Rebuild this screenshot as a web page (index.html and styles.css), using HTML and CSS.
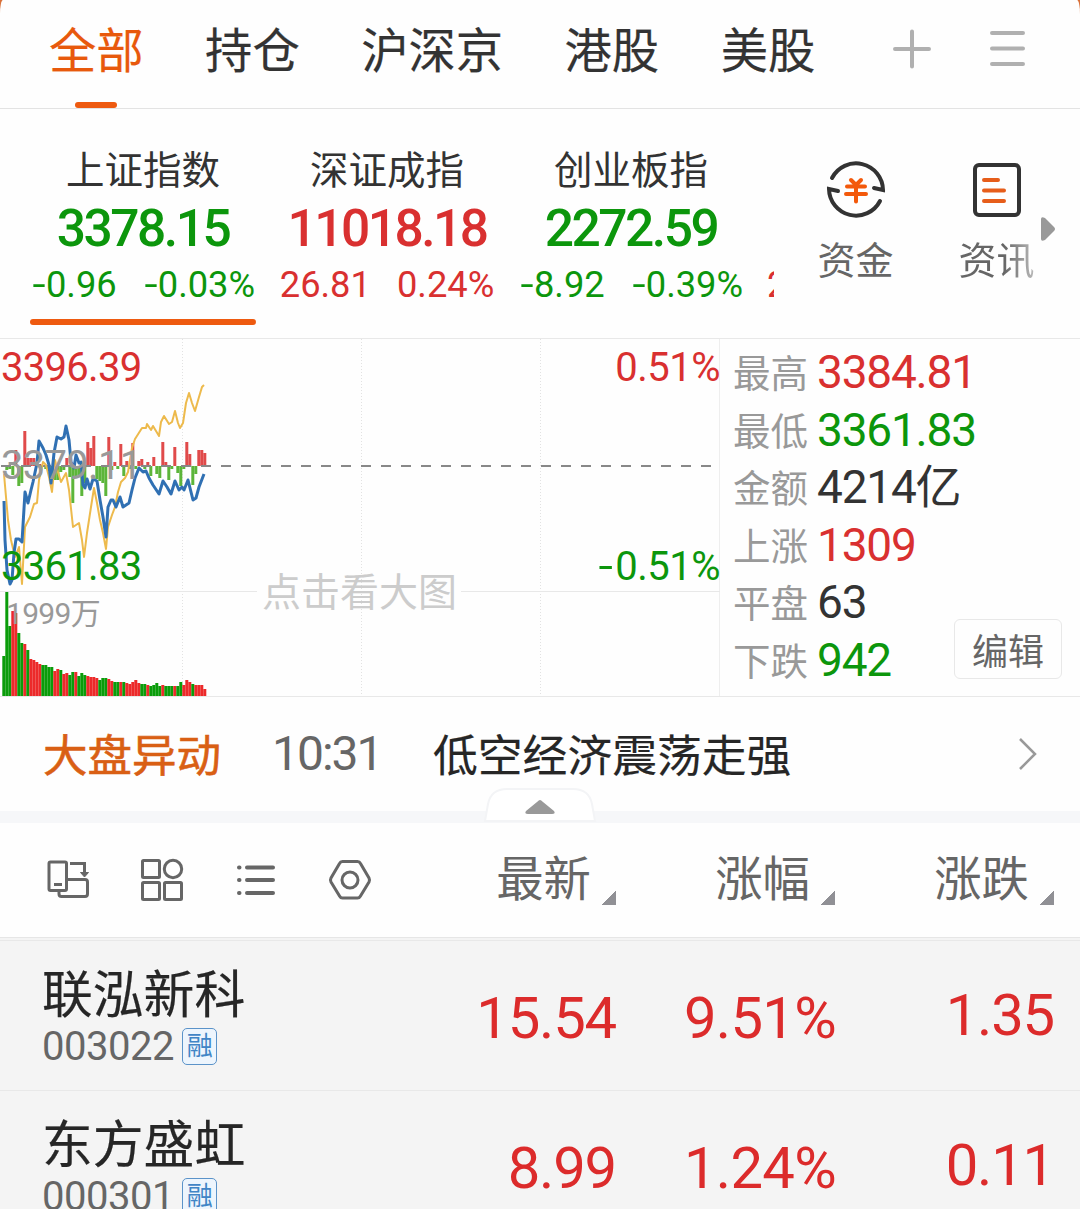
FILE: index.html
```html
<!doctype html>
<html lang="zh-CN">
<head>
	<meta charset="utf-8">
	<title>自选股</title>
	<link rel="stylesheet" href="styles.css">
</head>
<body>
<div class="page">
	<nav class="tabs">
		<a class="tab active">全部</a>
		<a class="tab">持仓</a>
		<a class="tab">沪深京</a>
		<a class="tab">港股</a>
		<a class="tab">美股</a>
		<svg class="icon-plus" width="40" height="42" viewBox="0 0 40 42"><path d="M3 21h34M20 3.500v35"/></svg>
		<svg class="icon-menu" width="40" height="42" viewBox="0 0 40 42"><path d="M4 5h31M4 20.500h31M4 36h31"/></svg>
	</nav>

	<section class="indexes">
		<div class="index-list">
			<div class="index green active">
				<h2>上证指数</h2>
				<strong>3378.15</strong>
				<p><span><i>-</i>0.96</span><span><i>-</i>0.03%</span></p>
			</div>
			<div class="index red">
				<h2>深证成指</h2>
				<strong>11018.18</strong>
				<p><span>26.81</span><span>0.24%</span></p>
			</div>
			<div class="index green">
				<h2>创业板指</h2>
				<strong>2272.59</strong>
				<p><span><i>-</i>8.92</span><span><i>-</i>0.39%</span></p>
			</div>
			<div class="index red next">
				<p><span>2</span></p>
			</div>
		</div>
		<div class="links">
			<a class="link">
				<svg width="62" height="62" viewBox="0 0 62 62">
					<g fill="none" stroke="#333" stroke-width="4" stroke-linecap="round">
						<path d="M7 19A27 27 0 0 1 58 31L49 29"/>
						<path d="M55 42A27 27 0 0 1 4 30L13 32"/>
					</g>
					<path d="M26 21l5 5 5-5M22 27.500h18M21 35h20M31 26v16.500" fill="none" stroke="#f3590b" stroke-width="4" stroke-linecap="round"/>
				</svg>
				<span>资金</span>
			</a>
			<a class="link">
				<svg width="62" height="62" viewBox="0 0 62 62">
					<rect x="9" y="6" width="44" height="50" rx="4" fill="none" stroke="#333" stroke-width="4"/>
					<path d="M18 21h14M18 31.500h20M18 42h20" fill="none" stroke="#e65d1a" stroke-width="4" stroke-linecap="round"/>
				</svg>
				<span class="fade">资讯</span>
			</a>
			<svg class="more" width="16" height="26" viewBox="0 0 16 26"><path d="M1 3Q1 0 5 2L14 11Q16 13 14 15L5 24Q1 26 1 23z" fill="#999"/></svg>
		</div>
	</section>

	<section class="market">
		<div class="chart">
			<svg width="720" height="357" viewBox="0 339 720 357">
				<path class="grid" d="M182.500 339v357M361.500 339v357M540.500 339v357"/>
				<path class="rule" d="M0 591.500h257M461 591.500h259"/>
				<g id="volume"></g>
				<g id="strength"></g>
				<path class="base" d="M1 466h712"/>
				<polyline class="average" points="4,474 6,497 8,520 11,540 15,557 19,547 22,584 25,527 30,517 34,504 37,503 39,480 43,462 46,465 49,477 52,492 55,460 58,472 61,482 66,473 69,490 73,527 79,523 82,540 84,557 87,533 91,507 94,488 97,503 100,520 103,533 106,549 108,527 112,515 115,507 118,492 121,482 125,478 128,472 132,448 135,439 142,428 146,428 147,424 151,430 153,426 159,436 161,422 164,416 169,424 172,422 175,411 178,423 180,428 183,423 186,403 189,393 192,403 195,411 199,397 202,387 204,385"/>
				<polyline class="price" points="4,501 5,540 7,570 10,584 12,580 14,553 16,539 19,539 22,542 25,492 28,503 31,490 33,482 37,463 39,441 43,448 46,455 49,465 51,483 54,453 57,437 61,439 64,437 66,426 69,440 71,462 74,468 76,455 79,463 81,462 83,485 85,488 87,479 90,489 93,479 97,481 100,500 103,517 106,537 108,507 111,500 113,500 116,507 120,497 123,507 129,503 132,490 135,478 139,468 143,472 146,471 149,478 153,485 159,494 163,481 167,487 171,494 175,481 179,490 182,487 184,490 188,480 193,500 196,498 199,487 204,474"/>
			</svg>
			<span class="label high red">3396.39</span>
			<span class="label mid">3379.11</span>
			<span class="label low green">3361.83</span>
			<span class="label high right red">0.51%</span>
			<span class="label low right green"><i>-</i>0.51%</span>
			<span class="label vol">1999万</span>
			<span class="label hint">点击看大图</span>
		</div>
		<div class="stats">
			<dl>
				<div><dt>最高</dt><dd class="red">3384.81</dd></div>
				<div><dt>最低</dt><dd class="green">3361.83</dd></div>
				<div><dt>金额</dt><dd>4214亿</dd></div>
				<div><dt>上涨</dt><dd class="red">1309</dd></div>
				<div><dt>平盘</dt><dd>63</dd></div>
				<div><dt>下跌</dt><dd class="green">942</dd></div>
			</dl>
			<button class="edit">编辑</button>
		</div>
	</section>

	<section class="news">
		<b>大盘异动</b>
		<time>10:31</time>
		<span>低空经济震荡走强</span>
		<svg width="22" height="36" viewBox="0 0 22 36"><path d="M3 3l15 15L3 33" fill="none" stroke="#999" stroke-width="2.500"/></svg>
	</section>
	<div class="divider">
		<svg class="fold" width="114" height="36" viewBox="0 0 114 36">
			<path d="M2 34L5 17Q8 2 24 2H90Q106 2 109 17L112 34z" fill="#fff" stroke="#f3f4f6" stroke-width="2"/>
			<path d="M57 13Q58 13 60 15L71 24Q73 27 69 27H45Q41 27 43 24L54 15Q56 13 57 13z" fill="#999"/>
		</svg>
	</div>

	<section class="toolbar">
		<div class="tools">
			<svg width="44" height="44" viewBox="0 0 44 44">
				<rect x="3" y="4" width="17.500" height="28.500" rx="1.500"/>
				<path d="M8 26.500h8M24 5.500h14.500v11M21 21.500h18q2.500 0 2.500 2.500v12q0 2.500-2.500 2.500H15.500q-2.500 0-2.500-2.500V33"/>
				<path d="M34.500 14.500h8l-4 4.500z" fill="#666" stroke-width="1"/>
			</svg>
			<svg width="44" height="44" viewBox="0 0 44 44">
				<rect x="2.500" y="2.500" width="17" height="17" rx="1"/>
				<circle cx="33" cy="11" r="8.700"/>
				<rect x="2.500" y="24.500" width="17" height="17" rx="1"/>
				<rect x="24.500" y="24.500" width="17" height="17" rx="1"/>
			</svg>
			<svg width="44" height="44" viewBox="0 0 44 44">
				<path d="M13 9.500h26M13 22h26M13 35h26M5 9.500h.5M5 22h.5M5 35h.5" stroke-width="4" stroke-linecap="round"/>
			</svg>
			<svg width="44" height="44" viewBox="0 0 44 44">
				<path d="M14.500 3.500h15q2 0 3 2l8.500 14.500q1 2 0 4L32.500 38q-1 2-3 2h-15q-2 0-3-2L3 24q-1-2 0-4L11.500 5.500q1-2 3-2z"/>
				<circle cx="22" cy="22" r="8"/>
			</svg>
		</div>
		<span class="sort">最新</span>
		<span class="sort">涨幅</span>
		<span class="sort">涨跌</span>
	</section>

	<ul class="stocks">
		<li>
			<div class="stock"><h3>联泓新科</h3><p>003022<em>融</em></p></div>
			<span>15.54</span><span class="rate">9.51%</span><span class="diff">1.35</span>
		</li>
		<li>
			<div class="stock"><h3>东方盛虹</h3><p>000301<em>融</em></p></div>
			<span>8.99</span><span class="rate">1.24%</span><span class="diff">0.11</span>
		</li>
	</ul>
</div>

<script>
	// one bar per minute, 3px apart
	var volumes = [40,104,70,85,83,63,53,52,46,37,36,34,32,31,31,29,29,25,27,26,22,23,21,24,24,20,23,21,20,19,19,18,16,18,18,17,15,14,14,14,14,13,12,14,16,13,12,12,11,10,11,13,10,11,10,10,10,10,10,14,11,16,14,12,11,11,11,7];
	var colors = "gggrrggrgrrrrggggrrgrrggrgggrrrrgggrrggrgrrrrrggrggggrgggrggrrrgrrrr";
	// above the base line when positive, below when negative
	var strength = [0,-4,-3,-9,16,-20,-17,35,8,8,8,3,2,0,-3,-5,-8,-14,-14,-6,-4,8,-11,-37,-12,-9,-30,-17,24,18,30,-13,-15,-17,-30,29,-4,4,-3,22,-10,5,-3,23,-3,5,7,-3,4,-10,9,-8,-12,24,4,-14,-3,19,-7,-20,-3,24,12,-19,-8,16,16,13];

	function addBar(id, i, y, height, color) {
		var rect = document.createElementNS("http://www.w3.org/2000/svg", "rect");
		rect.setAttribute("x", 2.3 + i * 3);
		rect.setAttribute("y", y);
		rect.setAttribute("width", 3);
		rect.setAttribute("height", height);
		rect.setAttribute("fill", color);
		document.getElementById(id).appendChild(rect);
	}

	for (var i = 0; i < volumes.length; i++) {
		addBar("volume", i, 696 - volumes[i], volumes[i], colors[i] == "g" ? "#0a9c0a" : "#ec2a2a");
		var s = strength[i];
		addBar("strength", i, s > 0 ? 466 - s : 466, Math.abs(s), s > 0 ? "#e04a4a" : "#5cb53a");
	}
</script>
</body>
</html>
```
FILE: styles.css
```css
* {
	box-sizing: border-box;
	margin: 0;
	padding: 0;
}
html {
	background: #d9713a;
}
body {
	width: 1080px;
	height: 1209px;
	overflow: hidden;
	font-family: Roboto, "Noto Sans CJK SC", sans-serif;
	color: #333;
}
i, em {
	font-style: normal;
}
i {
	display: inline-block;
	transform: scaleX(1.3);
	margin: 0 2px 0 3px;
}
.page {
	height: 1209px;
	overflow: hidden;
	background: #fefefe;
	border-radius: 3px 3px 0 0 / 14px 14px 0 0;
}
.red {
	color: #d93030;
}
.green {
	color: #0c960c;
}

/* top tabs */
.tabs {
	display: flex;
	height: 109px;
	padding-left: 49px;
	border-bottom: 1px solid #e3e3e3;
}
.tab {
	position: relative;
	margin-right: 61.5px;
	font-size: 47.3px;
	line-height: 104px;
	-webkit-text-stroke: 0.2px;
}
.tab.active {
	color: #e8590c;
}
.tab.active::after {
	content: "";
	position: absolute;
	left: 26px;
	top: 102px;
	width: 42px;
	height: 6px;
	border-radius: 3px;
	background: #ee5a10;
}
.icon-plus, .icon-menu {
	flex: none;
	margin-top: 28px;
	fill: none;
	stroke: #b0b0b0;
	stroke-width: 4;
	stroke-linecap: round;
}
.icon-plus {
	margin-left: 15px;
}
.icon-menu {
	margin-left: 56px;
}

/* index quotes */
.indexes {
	display: flex;
	height: 230px;
	border-bottom: 1px solid #e8e8e8;
}
.index-list {
	display: flex;
	width: 774px;
	padding-left: 21px;
	overflow: hidden;
}
.index {
	position: relative;
	flex: 0 0 244px;
	padding-top: 36px;
	text-align: center;
	white-space: nowrap;
}
.index h2 {
	font-size: 38.5px;
	font-weight: normal;
	line-height: 51px;
	color: #333;
}
.index strong {
	display: block;
	font-size: 51.5px;
	font-weight: 500;
	line-height: 66px;
	letter-spacing: -2.5px;
}
.index p {
	display: flex;
	justify-content: center;
	gap: 26px;
	font-size: 36.3px;
	line-height: 45px;
}
.index.active::after {
	content: "";
	position: absolute;
	left: 9px;
	top: 210px;
	width: 226px;
	height: 6px;
	border-radius: 3px;
	background: #ee5a10;
}
.index.next p {
	justify-content: flex-start;
	padding: 117px 0 0 14px;
}
.links {
	position: relative;
	display: flex;
	flex: 1;
	padding: 50px 0 0 11px;
}
.link {
	display: flex;
	flex-direction: column;
	align-items: center;
	width: 141px;
	font-size: 38px;
	line-height: 80px;
	color: #666;
}
.fade {
	background: linear-gradient(90deg, #666 60%, #bbb);
	-webkit-background-clip: text;
	color: transparent;
}
.more {
	position: absolute;
	left: 266px;
	top: 107px;
}

/* chart and market numbers */
.market {
	display: flex;
	height: 358px;
	border-bottom: 1px solid #e8e8e8;
}
.chart {
	position: relative;
	width: 720px;
	border-right: 1px solid #eee;
}
.chart svg {
	display: block;
}
.grid {
	stroke: #e2e2e2;
	stroke-dasharray: 1 2;
}
.rule {
	stroke: #e8e8e8;
}
.base {
	stroke: #888;
	stroke-width: 2;
	stroke-dasharray: 10 10;
}
.price, .average {
	fill: none;
	stroke: #3070b3;
	stroke-width: 3;
	stroke-linejoin: round;
}
.average {
	stroke: #edba4c;
	stroke-width: 2;
}
.label {
	position: absolute;
	left: 1px;
	font-size: 40px;
	line-height: 50px;
	letter-spacing: -0.7px;
}
.label.right {
	left: auto;
	right: -1px;
	letter-spacing: -0.5px;
}
.label i {
	margin-right: 5px;
}
.high {
	top: 4px;
}
.mid {
	top: 102px;
	color: #999;
}
.low {
	top: 203px;
}
.vol {
	left: 6px;
	top: 250px;
	font-size: 30px;
	color: #999;
}
.hint {
	left: 262px;
	top: 229px;
	font-size: 39px;
	letter-spacing: 0;
	color: #ccc;
}
.stats {
	position: relative;
	flex: 1;
	padding: 4px 0 0 13px;
}
.stats dl div {
	display: flex;
	height: 57.6px;
	line-height: 58px;
}
.stats dt {
	width: 84px;
	font-size: 37.5px;
	line-height: 62px;
	color: #999;
}
.stats dd {
	font-size: 46px;
	letter-spacing: -1.2px;
}
.edit {
	position: absolute;
	right: 18px;
	bottom: 17px;
	width: 108px;
	height: 60px;
	border: 1px solid #e8e8e8;
	border-radius: 6px;
	background: #fefefe;
	font: 36px/56px "Noto Sans CJK SC", sans-serif;
	color: #666;
}

/* news line */
.news {
	display: flex;
	align-items: center;
	height: 114px;
	padding: 0 41px 0 43px;
	font-size: 44.8px;
	line-height: 120px;
	color: #262626;
}
.news b {
	width: 229px;
	height: 114px;
	font-size: 44.5px;
	font-weight: normal;
	-webkit-text-stroke: 0.6px;
	color: #d95f14;
}
.news time {
	width: 161px;
	font-size: 48px;
	letter-spacing: -2px;
	color: #666;
}
.news span {
	height: 114px;
	-webkit-text-stroke: 0.2px;
}
.news svg {
	margin-left: auto;
}
.divider {
	position: relative;
	height: 12px;
	background: #f6f7f9;
}
.fold {
	position: absolute;
	left: 483px;
	top: -24px;
}

/* list header */
.toolbar {
	display: flex;
	align-items: center;
	height: 114px;
}
.tools {
	display: flex;
	gap: 50px;
	width: 398px;
	padding-left: 46px;
}
.tools svg {
	flex: none;
	fill: none;
	stroke: #666;
	stroke-width: 3;
}
.sort {
	width: 219px;
	padding-right: 26px;
	text-align: right;
	font-size: 47.4px;
	line-height: 116px;
	color: #666;
	background: linear-gradient(135deg, transparent 50%, #909095 50%) right 1px top 69px / 15px 14px no-repeat;
}

/* stock rows */
.stocks {
	border-top: 1px solid #e6e6e6;
	padding-top: 2px;
	background: #f4f4f4;
	list-style: none;
}
.stocks li {
	display: flex;
	height: 150px;
	border-top: 1px solid #e8e8e8;
	line-height: 154px;
}
.stocks span {
	width: 218px;
	text-align: right;
	font-size: 58px;
	letter-spacing: -1.2px;
	color: #dc2b2b;
}
.stocks .rate {
	width: 220px;
	letter-spacing: -0.7px;
}
.stocks .diff {
	line-height: 148px;
}
.stock {
	width: 398px;
	padding: 22px 0 0 42px;
}
.stock h3 {
	font-size: 50.8px;
	font-weight: normal;
	line-height: 66px;
	-webkit-text-stroke: 0.2px;
	color: #262626;
}
.stock p {
	display: flex;
	align-items: center;
	height: 35px;
	font-size: 40px;
	line-height: 35px;
	letter-spacing: -0.5px;
	color: #666;
}
.stock em {
	flex: none;
	width: 35px;
	height: 37px;
	margin-left: 8px;
	border: 1.5px solid #5b93c9;
	border-radius: 5px;
	background: #edf5fd;
	font-size: 26px;
	line-height: 34px;
	text-align: center;
	color: #4085c6;
}
```
